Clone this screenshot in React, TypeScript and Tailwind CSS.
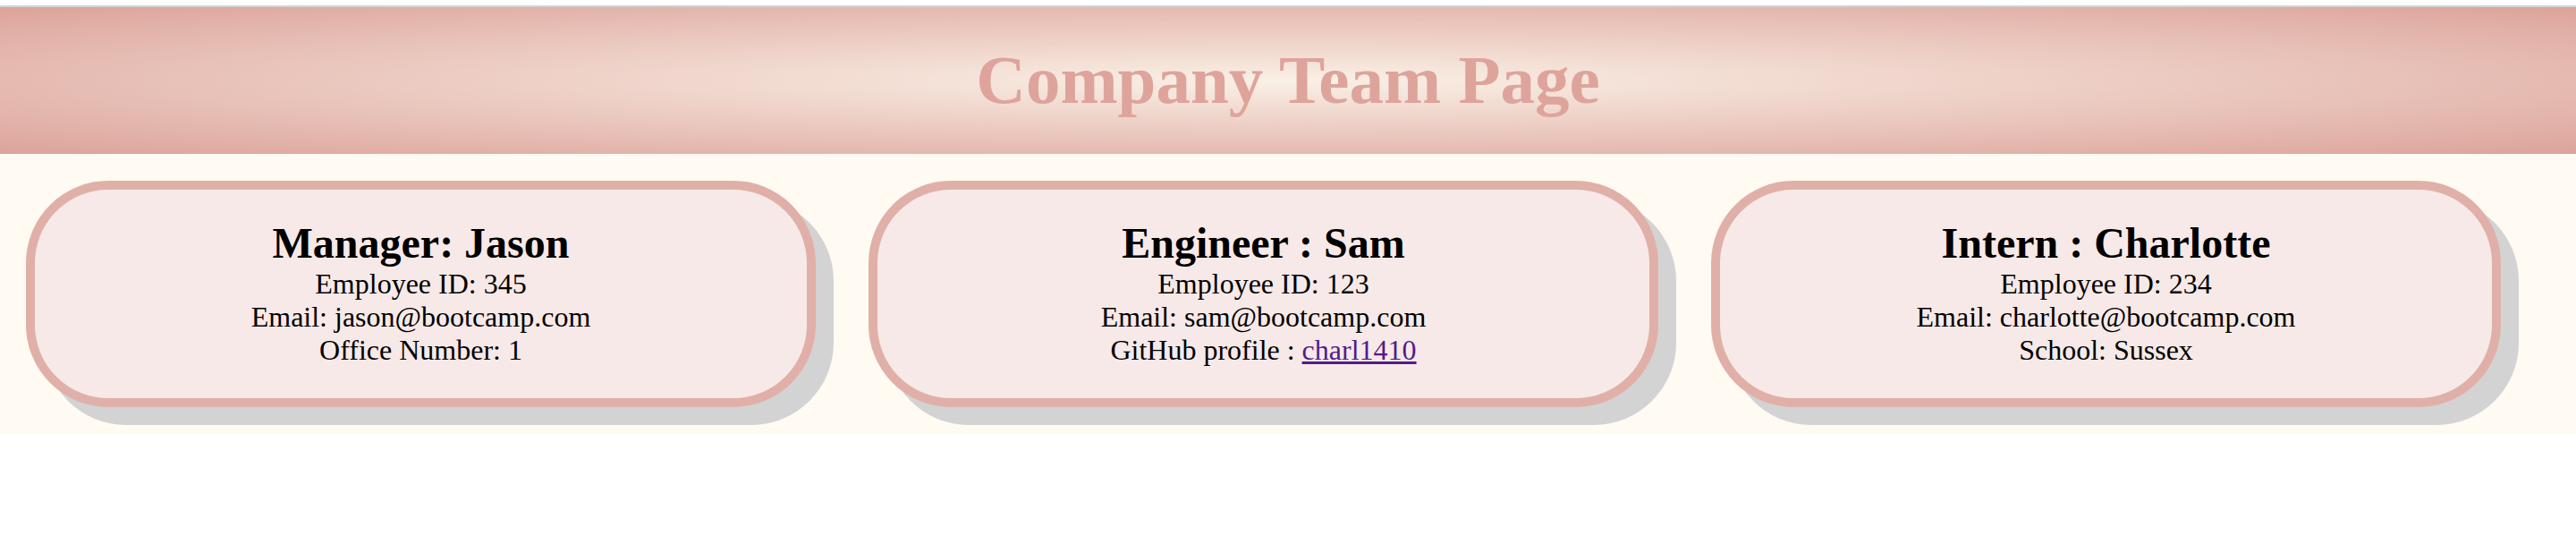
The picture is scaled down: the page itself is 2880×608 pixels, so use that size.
const team = [
  {
    title: 'Manager: Jason',
    id: 345,
    email: 'jason@bootcamp.com',
    extra: 'Office Number: 1',
  },
  {
    title: 'Engineer : Sam',
    id: 123,
    email: 'sam@bootcamp.com',
    github: 'charl1410',
  },
  {
    title: 'Intern : Charlotte',
    id: 234,
    email: 'charlotte@bootcamp.com',
    extra: 'School: Sussex',
  },
]

export default function App() {
  return (
    <div className="min-h-[608px] bg-white font-['Liberation_Serif','Times_New_Roman',serif] text-black">
      <header className="mt-[6px] border-t-2 border-[#d3d3d3] h-[166px] flex items-center justify-center bg-[radial-gradient(ellipse_at_center,#faf0e6_0%,#dca39a_100%)]">
        <h1 className="text-[77px] font-bold text-[#dea49b]">Company Team Page</h1>
      </header>

      <main className="bg-[#fffaf2] pl-[29px] py-[30px] flex gap-[59px]">
        {team.map((m) => (
          <div
            key={m.id}
            className="w-[883px] h-[253px] rounded-[92px] border-[10px] border-[#e0b0a8] bg-[#f7e9e7] shadow-[20px_20px_0_#d3d3d3] flex flex-col items-center justify-center text-[32px] leading-[1.15] pb-[3px]"
          >
            <h2 className="text-[48px] font-bold">{m.title}</h2>
            <p>Employee ID: {m.id}</p>
            <p>Email: {m.email}</p>
            {m.github ? (
              <p>
                GitHub profile : <a href="#" className="text-[#551a8b] underline">{m.github}</a>
              </p>
            ) : (
              <p>{m.extra}</p>
            )}
          </div>
        ))}
      </main>
    </div>
  )
}
